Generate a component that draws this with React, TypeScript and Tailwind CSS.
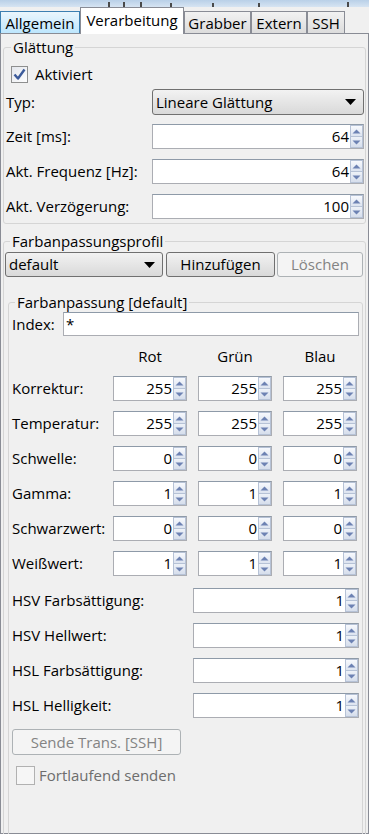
import React from "react";

const font = "font-['Open_Sans',sans-serif]";

function Arrow({ up }: { up?: boolean }) {
  return (
    <svg width="9" height="5" viewBox="0 0 9 5">
      {up ? (
        <path d="M0.5 4.5 L4.5 0.5 L8.5 4.5 Z" fill="#6d82b3" />
      ) : (
        <path d="M0.5 0.5 L4.5 4.5 L8.5 0.5 Z" fill="#6d82b3" />
      )}
    </svg>
  );
}

function Spin({ value, className }: { value: string; className: string }) {
  return (
    <div className={`flex h-[25px] border border-[#abadb3] border-t-[#8e9aa8] bg-white ${className}`}>
      <div className="flex-1 text-right pr-[1px] leading-[23px]">{value}</div>
      <div className="flex w-[13px] flex-col">
        <div className="flex flex-1 items-center justify-center border border-[#b6c2d6] bg-gradient-to-b from-[#f7f9fd] to-[#dde4f0]">
          <Arrow up />
        </div>
        <div className="flex flex-1 items-center justify-center border border-t-0 border-[#b6c2d6] bg-gradient-to-b from-[#eef2f8] to-[#d6deec]">
          <Arrow />
        </div>
      </div>
    </div>
  );
}

function ComboArrow() {
  return (
    <svg width="11" height="6" viewBox="0 0 11 6">
      <path d="M0 0 L11 0 L5.5 6 Z" fill="#000" />
    </svg>
  );
}

function Tab({ label, w, state }: { label: string; w: string; state: "hover" | "sel" | "norm" }) {
  if (state === "sel") {
    return (
      <div
        className={`relative z-10 mb-[-1px] flex h-[27px] ${w} items-start justify-center border border-b-0 border-[#898c95] bg-white pt-[2px] leading-[20px]`}
      >
        {label}
      </div>
    );
  }
  const bg =
    state === "hover"
      ? "bg-gradient-to-b from-[#eaf6fd] to-[#bde6fd] border-[#3c7fb1]"
      : "bg-gradient-to-b from-[#f2f2f2] to-[#dcdcdc] border-[#898c95]";
  return (
    <div className={`flex h-[22px] ${w} items-center justify-center border border-b-0 ${bg} leading-[20px]`}>
      {label}
    </div>
  );
}

function Label({ children, className = "" }: { children: React.ReactNode; className?: string }) {
  return <div className={`leading-[25px] whitespace-nowrap ${className}`}>{children}</div>;
}

export default function App() {
  const rgbRows: [string, string][] = [
    ["Korrektur:", "255"],
    ["Temperatur:", "255"],
    ["Schwelle:", "0"],
    ["Gamma:", "1"],
    ["Schwarzwert:", "0"],
    ["Weißwert:", "1"],
  ];
  const hsRows = ["HSV Farbsättigung:", "HSV Hellwert:", "HSL Farbsättigung:", "HSL Helligkeit:"];

  return (
    <div className={`flex h-[834px] w-[369px] flex-col overflow-hidden bg-[#f0f0f0] text-[15px] text-black ${font}`}>
      {/* window strip */}
      <div className="flex h-[7px] shrink-0 items-end bg-gradient-to-b from-[#b9d0e8] to-[#d6e4f2]">
        <div className="ml-[108px] h-[5px] w-[2px] bg-[#4a4a4a]" />
        <div className="ml-[13px] h-[5px] w-[2px] bg-[#4a4a4a]" />
        <div className="ml-[15px] h-[5px] w-[2px] bg-[#4a4a4a]" />
        <div className="ml-[28px] h-[4px] w-[2px] bg-[#4a4a4a]" />
        <div className="ml-[40px] h-[4px] w-[2px] bg-[#4a4a4a]" />
        <div className="ml-[44px] h-[4px] w-[2px] bg-[#4a4a4a]" />
        <div className="ml-[87px] h-[5px] w-[2px] bg-[#4a4a4a]" />
      </div>

      {/* tabs */}
      <div className="flex h-[26px] shrink-0 items-end">
        <Tab label="Allgemein" w="w-[80px]" state="hover" />
        <Tab label="Verarbeitung" w="w-[104px]" state="sel" />
        <Tab label="Grabber" w="w-[67px]" state="norm" />
        <Tab label="Extern" w="w-[56px]" state="norm" />
        <Tab label="SSH" w="w-[38px]" state="norm" />
      </div>

      {/* panel */}
      <div className="flex min-h-0 flex-1 flex-col border border-[#898c95] bg-[#f0f0f0]">
        {/* Glättung */}
        <fieldset className="mx-[2px] mt-[4px] min-w-0 rounded-[3px] border border-[#d5d5d5] pb-[4px] pl-[2px] pr-[1px]">
          <legend className="ml-[5px] px-[2px] leading-[19px]">Glättung</legend>
          <div className="mt-[8px] flex h-[18px] items-center">
            <div className="ml-[5px] flex h-[17px] w-[17px] items-center justify-center border border-[#8e8f8f] bg-gradient-to-br from-[#e4e7ed] to-[#fdfdfd]">
              <svg width="13" height="12" viewBox="0 0 13 12">
                <path d="M1.5 6.5 L5 10.5 L11.5 1.5" stroke="#3b5a9a" strokeWidth="2.4" fill="none" strokeLinejoin="round" />
              </svg>
            </div>
            <span className="ml-[7px] leading-[18px]">Aktiviert</span>
          </div>
          <div className="mt-[6px] flex items-center">
            <Label className="flex-1">Typ:</Label>
            <div className="flex h-[26px] w-[212px] items-center justify-between rounded-[3px] border border-[#707070] bg-gradient-to-b from-[#f2f2f2] to-[#d9d9d9] pl-[3px] pr-[7px]">
              <span className="leading-[24px]">Lineare Glättung</span>
              <ComboArrow />
            </div>
          </div>
          <div className="mt-[9px] flex flex-col gap-[10px]">
            <div className="flex items-center">
              <Label className="flex-1">Zeit [ms]:</Label>
              <Spin value="64" className="w-[212px]" />
            </div>
            <div className="flex items-center">
              <Label className="flex-1">Akt. Frequenz [Hz]:</Label>
              <Spin value="64" className="w-[212px]" />
            </div>
            <div className="flex items-center">
              <Label className="flex-1">Akt. Verzögerung:</Label>
              <Spin value="100" className="w-[212px]" />
            </div>
          </div>
        </fieldset>

        {/* Farbanpassungsprofil */}
        <fieldset className="mx-[2px] mt-[8px] min-w-0 flex-1 rounded-[3px] border border-[#d5d5d5] pl-[1px] pr-[1px]">
          <legend className="ml-[5px] px-[2px] leading-[19px]">Farbanpassungsprofil</legend>
          <div className="mt-[1px] flex h-[25px] items-stretch">
            <div className="flex w-[158px] items-center justify-between rounded-[3px] border border-[#707070] bg-gradient-to-b from-[#f2f2f2] to-[#d9d9d9] pl-[3px] pr-[7px]">
              <span className="leading-[23px]">default</span>
              <ComboArrow />
            </div>
            <div className="ml-[3px] flex w-[109px] items-center justify-center rounded-[3px] border border-[#707070] bg-gradient-to-b from-[#f2f2f2] to-[#d9d9d9]">
              Hinzufügen
            </div>
            <div className="ml-[2px] flex w-[86px] items-center justify-center rounded-[3px] border border-[#adb2b5] bg-[#f4f4f4] text-[#838383]">
              Löschen
            </div>
          </div>

          {/* Farbanpassung [default] */}
          <fieldset className="ml-[3px] mr-[1px] mt-[16px] h-[600px] min-w-0 rounded-[3px] border border-[#d5d5d5] pl-[3px] pr-[3px]">
            <legend className="ml-[3px] px-[2px] leading-[19px]">Farbanpassung [default]</legend>
            <div className="flex h-[24px] items-center">
              <span className="w-[51px] leading-[24px]">Index:</span>
              <div className="h-[24px] flex-1 border border-[#abadb3] border-t-[#8e9aa8] bg-white pl-[2px] leading-[22px]">*</div>
            </div>

            <div className="mt-[11px] grid grid-cols-[90px_74px_74px_74px] gap-x-[11px] gap-y-[10px]">
              <div className="h-[19px]" />
              <div className="text-center leading-[19px]">Rot</div>
              <div className="text-center leading-[19px]">Grün</div>
              <div className="text-center leading-[19px]">Blau</div>
              {rgbRows.map(([l, v]) => (
                <React.Fragment key={l}>
                  <Label>{l}</Label>
                  <Spin value={v} className="w-[74px]" />
                  <Spin value={v} className="w-[74px]" />
                  <Spin value={v} className="w-[74px]" />
                </React.Fragment>
              ))}
            </div>

            <div className="mt-[12px] flex flex-col gap-[10px]">
              {hsRows.map((l) => (
                <div key={l} className="flex items-center">
                  <Label className="flex-1">{l}</Label>
                  <Spin value="1" className="w-[166px]" />
                </div>
              ))}
            </div>

            <div className="mt-[11px] flex h-[26px] w-[169px] items-center justify-center rounded-[3px] border border-[#adb2b5] bg-[#f4f4f4] text-[#838383]">
              Sende Trans. [SSH]
            </div>
            <div className="mt-[11px] flex items-center">
              <div className="ml-[4px] h-[19px] w-[19px] border border-[#b1b1b1] bg-[#f6f6f6]" />
              <span className="ml-[4px] leading-[19px] text-[#6d6d6d]">Fortlaufend senden</span>
            </div>
          </fieldset>
        </fieldset>
      </div>
    </div>
  );
}
